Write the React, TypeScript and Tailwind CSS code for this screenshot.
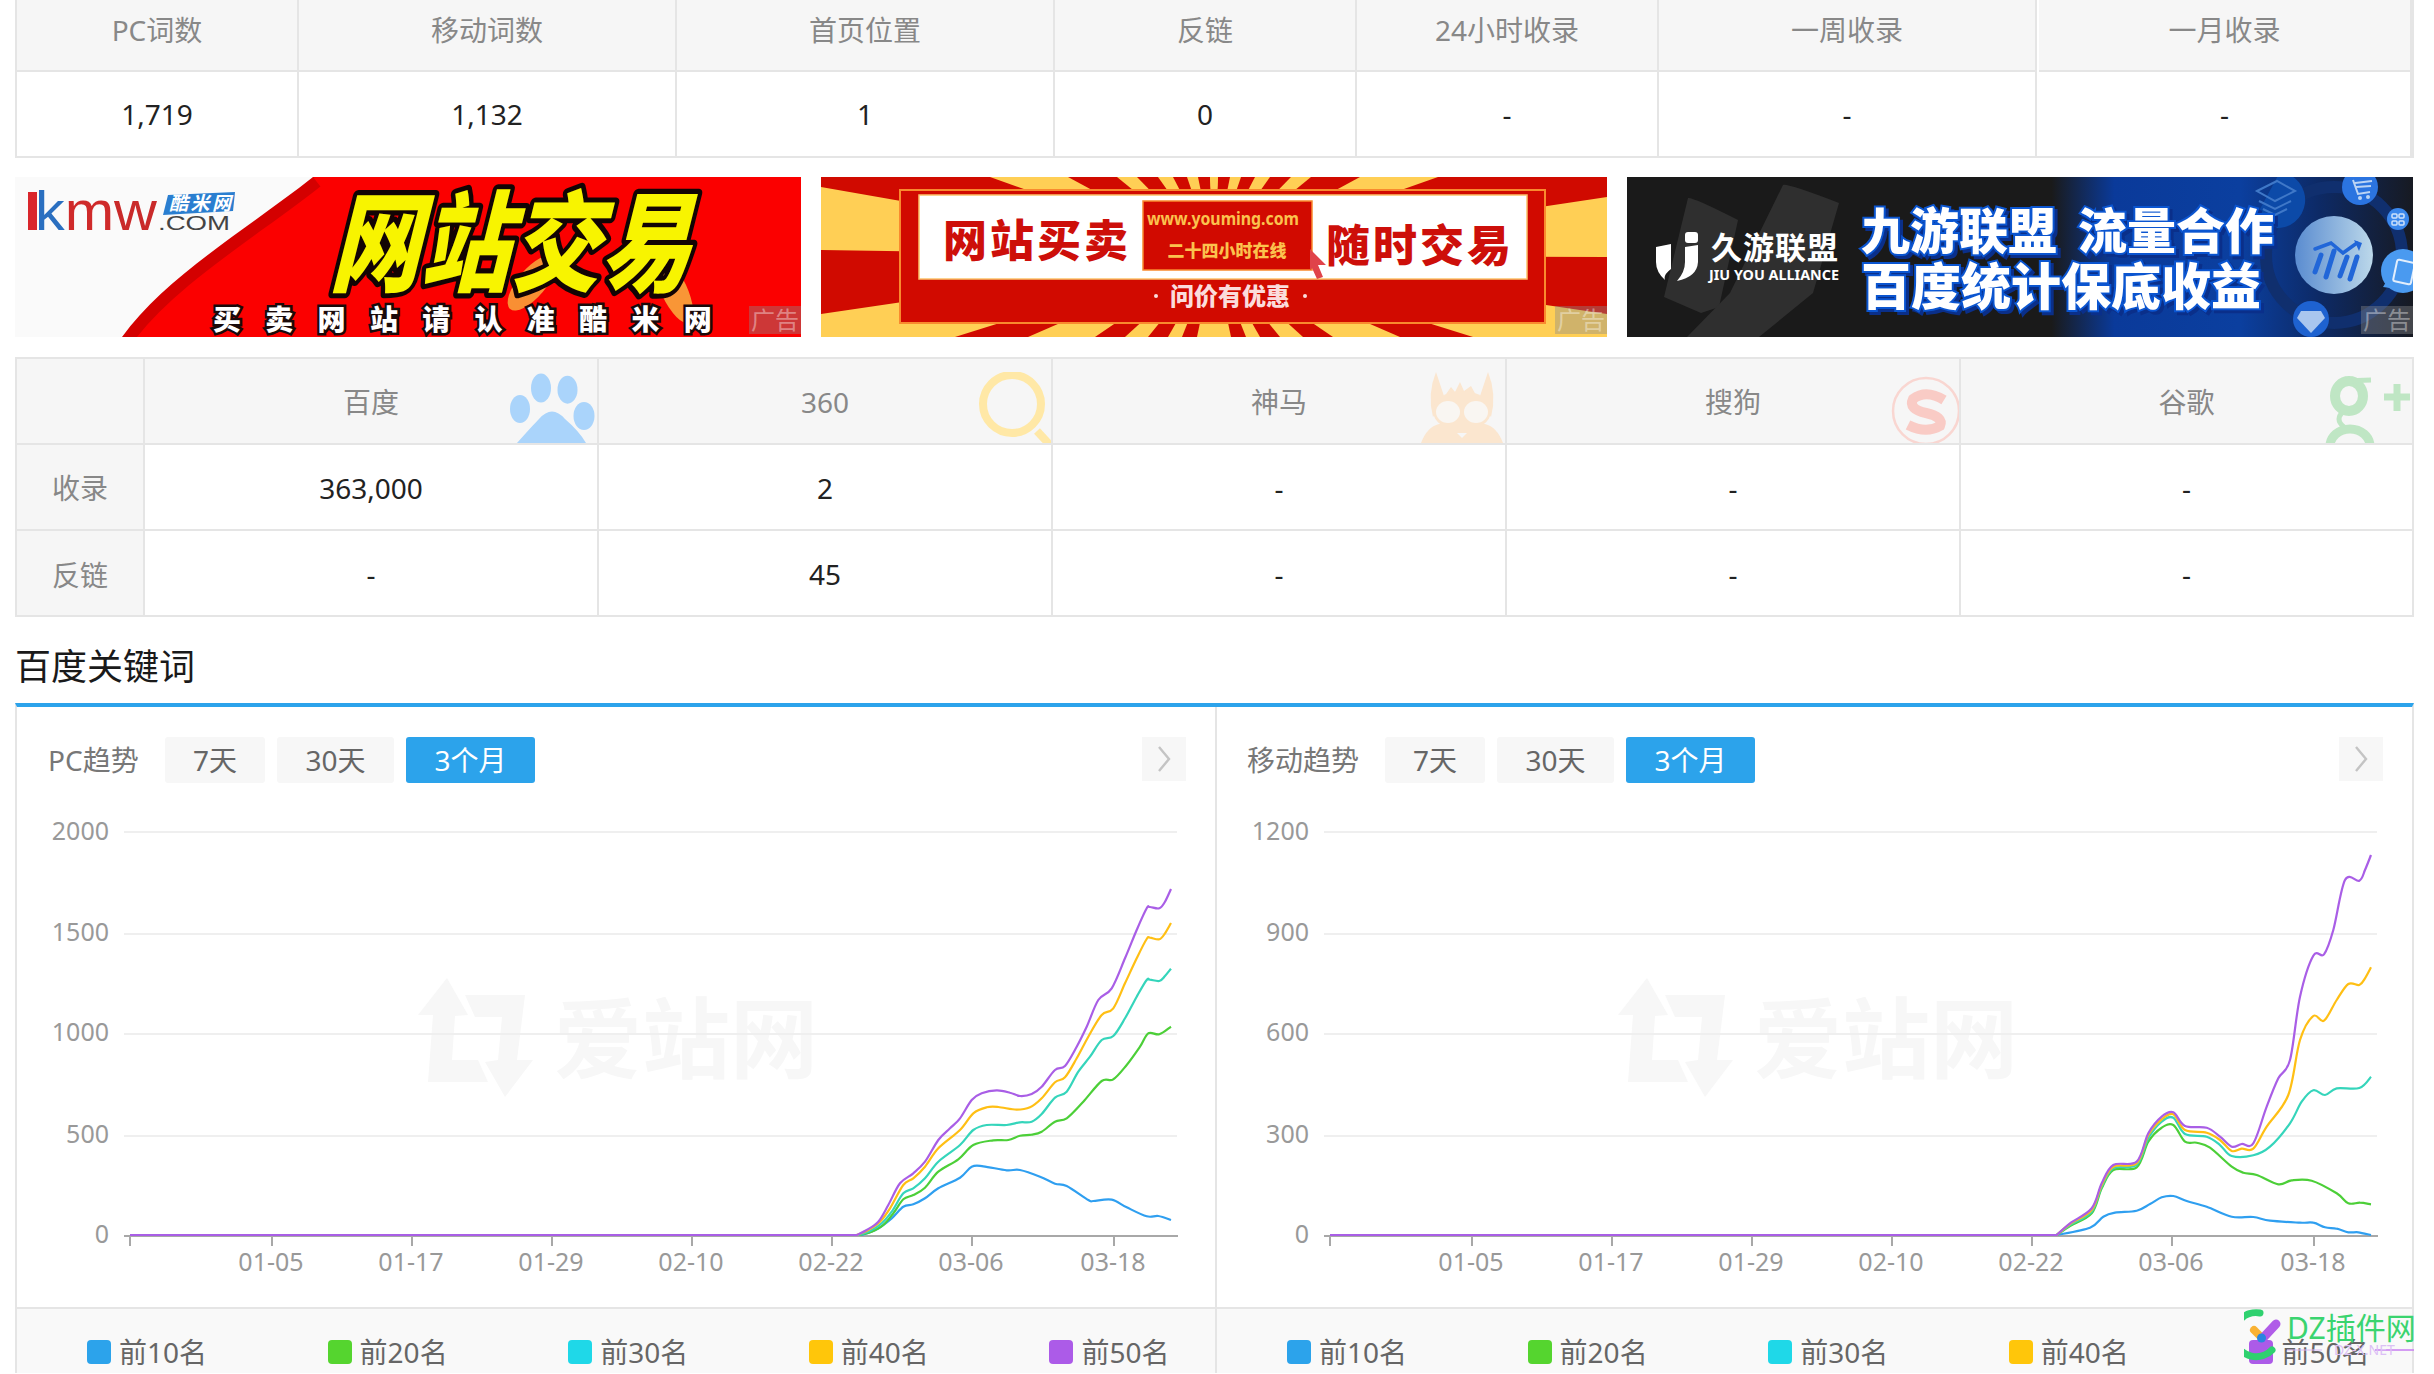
import React from "react";

type P = [number, number];

function smooth(pts: P[]): string {
  let d = `M${pts[0][0]} ${pts[0][1]}`;
  for (let i = 0; i < pts.length - 1; i++) {
    const p0 = pts[Math.max(0, i - 1)];
    const p1 = pts[i];
    const p2 = pts[i + 1];
    const p3 = pts[Math.min(pts.length - 1, i + 2)];
    const c1x = p1[0] + (p2[0] - p0[0]) / 6;
    const c1y = p1[1] + (p2[1] - p0[1]) / 6;
    const c2x = p2[0] - (p3[0] - p1[0]) / 6;
    const c2y = p2[1] - (p3[1] - p1[1]) / 6;
    d += ` C${c1x.toFixed(1)} ${c1y.toFixed(1)} ${c2x.toFixed(1)} ${c2y.toFixed(1)} ${p2[0].toFixed(1)} ${p2[1].toFixed(1)}`;
  }
  return d;
}

const flat = (x0: number, pts: number[][]): string => {
  const mapped: P[] = pts.map(([x, y]) => [x0 + x / 3, 850 + y / 3]);
  return `M130 1235 L${mapped[0][0].toFixed(1)} 1235 ` + smooth(mapped).replace(/^M[^C]*/, "");
};

const pc: Record<string, number[][]> = {
  blue: [[185,1155],[230,1138],[275,1105],[310,1070],[340,1063],[375,1045],[415,1015],[480,983],[515,950],[550,949],[620,961],[660,960],[720,980],[765,1001],[800,1008],[865,1050],[880,1053],[935,1049],[980,1072],[1040,1099],[1075,1098],[1113,1110]],
  green: [[180,1155],[215,1145],[250,1125],[280,1090],[310,1048],[340,1035],[375,1013],[415,965],[475,928],[520,885],[580,871],[625,870],[660,857],[695,854],[725,845],[765,815],[800,805],[850,755],[905,693],[940,688],[980,645],[1020,590],[1045,550],[1078,553],[1113,530]],
  teal: [[175,1155],[210,1143],[245,1120],[275,1085],[310,1030],[340,1015],[375,985],[415,935],[480,885],[520,840],[560,825],[620,825],[660,817],[695,815],[725,792],[765,743],[800,725],[835,665],[870,620],[905,570],[940,558],[975,505],[1010,440],[1040,390],[1050,389],[1078,393],[1095,378],[1113,356]],
  yellow: [[170,1155],[205,1140],[240,1115],[270,1075],[310,1005],[340,985],[375,950],[415,895],[480,840],[520,790],[560,772],[595,771],[650,779],[690,772],[725,745],[765,697],[795,682],[830,625],[865,560],[905,495],[940,475],[975,400],[1010,325],[1040,267],[1050,263],[1078,268],[1095,250],[1113,219]],
  purple: [[170,1155],[200,1140],[235,1115],[265,1065],[300,1000],[340,970],[375,935],[415,870],[450,835],[480,805],[515,750],[545,730],[590,721],[630,728],[660,738],[695,732],[725,710],[765,660],[795,648],[830,590],[860,530],[895,450],[935,415],[975,325],[1010,240],[1040,175],[1050,171],[1078,175],[1095,155],[1113,117]],
};

const mobile: Record<string, number[][]> = {
  blue: [[20,1155],[120,1133],[160,1100],[195,1088],[260,1082],[300,1062],[335,1042],[370,1038],[410,1053],[470,1070],[545,1100],[610,1101],[660,1112],[750,1118],[790,1118],[825,1132],[860,1136],[895,1147],[925,1147],[963,1155]],
  green: [[20,1155],[60,1128],[125,1090],[155,1015],[190,960],[260,952],[295,875],[335,833],[370,825],[405,875],[440,878],[480,893],[545,950],[580,968],[620,975],[685,1003],[725,991],[785,992],[860,1030],[895,1060],[930,1058],[963,1063]],
  teal: [[20,1155],[60,1125],[125,1085],[155,1010],[190,955],[260,945],[295,865],[335,815],[370,803],[405,852],[470,860],[510,885],[545,918],[610,916],[660,890],[720,820],[755,755],[790,721],[825,735],[860,715],[928,714],[963,680]],
  yellow: [[20,1155],[60,1122],[125,1080],[155,1005],[190,950],[260,940],[295,855],[335,808],[370,793],[405,840],[470,848],[510,870],[545,903],[575,896],[610,896],[650,830],[715,735],[750,570],[790,498],[822,512],[860,450],[895,402],[928,405],[945,385],[963,352]],
  purple: [[20,1155],[60,1120],[125,1075],[155,1000],[190,945],[260,935],[295,850],[335,800],[370,787],[405,828],[470,833],[510,860],[545,890],[575,882],[610,880],[650,770],[685,685],[720,630],[750,440],[790,317],[822,313],[850,240],[885,90],[928,92],[945,60],[963,15]],
};

const lineColors: [string, string][] = [
  ["blue", "#2f9ff0"],
  ["green", "#4ccf38"],
  ["teal", "#35d5bb"],
  ["yellow", "#ffbf14"],
  ["purple", "#a95ee6"],
];

const ticks = [272, 412, 552, 692, 832, 972, 1114];
const dates = ["01-05", "01-17", "01-29", "02-10", "02-22", "03-06", "03-18"];
const gridY = [832, 934, 1034, 1136];

function Chart({ data, x0, labels, width }: { data: Record<string, number[][]>; x0: number; labels: string[]; width: number }) {
  return (
    <svg viewBox={`17 783 ${width} 524`} className="block h-[524px] w-full">
      <polygon fill="#f7f7f7" points="447,978 468,1015 455,1016 452,1060 478,1060 488,1082 428,1082 433,1015 418,1015" />
      <polygon fill="#f7f7f7" points="465,995 525,995 517,1060 533,1060 505,1097 485,1062 498,1060 502,1017 475,1017" />
      <text x="554" y="1071" fontSize="88" fill="#f7f7f7" fontWeight="700">爱站网</text>
      {gridY.map((y) => (
        <line key={y} x1="124" x2="1177" y1={y} y2={y} stroke="#efefef" strokeWidth="2" />
      ))}
      <line x1="124" x2="1178" y1="1236" y2="1236" stroke="#a8a8a8" strokeWidth="2" />
      <line x1="130" x2="130" y1="1236" y2="1246" stroke="#a8a8a8" strokeWidth="2" />
      {ticks.map((t, i) => (
        <g key={t}>
          <line x1={t} x2={t} y1="1236" y2="1246" stroke="#a8a8a8" strokeWidth="2" />
          <text x={t - 1} y="1271" fontSize="25" fill="#999999" textAnchor="middle">{dates[i]}</text>
        </g>
      ))}
      {labels.map((l, i) => (
        <text key={l} x="109" y={[840, 941, 1041, 1143, 1243][i]} fontSize="25" fill="#999999" textAnchor="end">{l}</text>
      ))}
      {lineColors.map(([k, c]) => (
        <path key={k} d={flat(x0, data[k])} fill="none" stroke={c} strokeWidth="2.2" strokeLinejoin="round" />
      ))}
    </svg>
  );
}

const legend: [string, string][] = [
  ["前10名", "bg-[#2ca3eb]"],
  ["前20名", "bg-[#55d52f]"],
  ["前30名", "bg-[#1fd8e8]"],
  ["前40名", "bg-[#ffc60a]"],
  ["前50名", "bg-[#ac5be8]"],
];

function Panel({ title, titleW, data, x0, labels, width, last }: { title: string; titleW: string; data: Record<string, number[][]>; x0: number; labels: string[]; width: number; last?: boolean }) {
  return (
    <div className={last ? "flex w-[1195px] flex-col" : "flex w-[1200px] flex-col border-r-2 border-[#e5e5e5]"}>
      <div className={`flex h-[76px] items-start pt-[30px] ${last ? "pl-[30px] pr-[29px]" : "pl-[31px] pr-[29px]"}`}>
        <span className={`h-[46px] ${titleW} text-[28px] leading-[46px] text-[#777777]`}>{title}</span>
        <button className="ml-[26px] h-[46px] w-[100px] rounded-[3px] bg-[#f7f7f7] text-[28px] leading-[46px] text-[#666666]">7天</button>
        <button className="ml-[12px] h-[46px] w-[117px] rounded-[3px] bg-[#f7f7f7] text-[28px] leading-[46px] text-[#666666]">30天</button>
        <button className="ml-[12px] h-[46px] w-[129px] rounded-[3px] bg-[#2ca3eb] text-[28px] leading-[46px] text-white">3个月</button>
        <div className="ml-auto flex h-[44px] w-[44px] items-center justify-center bg-[#f7f7f7]">
          <svg viewBox="0 0 14 28" className="h-[28px] w-[14px]">
            <path d="M2 2 L12 14 L2 26" fill="none" stroke="#c4c4c4" strokeWidth="2.4" />
          </svg>
        </div>
      </div>
      <Chart data={data} x0={x0} labels={labels} width={width} />
      <div className="flex h-[66px] border-t-2 border-[#e5e5e5] bg-[#f9f9f9] pl-[70px] pt-[24px]">
        {legend.map(([t, c]) => (
          <div key={t} className="flex h-[38px] w-[240.6px] shrink-0 items-center gap-[8px]">
            <span className={`h-[24px] w-[24px] rounded-[4px] ${c}`} />
            <span className="text-[28px] leading-[38px] text-[#666666]">{t}</span>
          </div>
        ))}
      </div>
    </div>
  );
}

const Ad = () => (
  <span className="absolute bottom-[3px] right-0 h-[28px] w-[52px] bg-[#8a8a8a]/40 text-center text-[24px] leading-[28px] text-white/40">广告</span>
);

function BannerKmw() {
  return (
    <div className="relative h-[160px] w-[786px] overflow-hidden">
      <svg viewBox="0 0 786 160" className="block h-full w-full">
        <rect width="786" height="160" fill="#fb0000" />
        <ellipse cx="517" cy="106" rx="14" ry="34" fill="#f8a83c" opacity="0.85" transform="rotate(40 517 106)" />
        <ellipse cx="659" cy="113" rx="13" ry="36" fill="#f8b040" opacity="0.85" transform="rotate(-25 659 113)" />
        <path d="M298 0 C235 50 150 100 107 160" fill="none" stroke="#d40000" strokeWidth="24" />
        <path d="M0 0 H298 C235 50 150 100 107 160 H0 Z" fill="#fafafa" />
        <rect x="13" y="15" width="9" height="38" fill="#d9262c" />
        <text x="20" y="53" fontSize="56" fontFamily="Liberation Sans" textLength="122" lengthAdjust="spacingAndGlyphs">
          <tspan fill="#2a6fc0">k</tspan>
          <tspan fill="#cf2a2a">m</tspan>
          <tspan fill="#c92a2a">w</tspan>
        </text>
        <path d="M153 18 L220 15 L218 34 L148 38 Z" fill="#2a7ed0" />
        <text x="154" y="33" fontSize="19" fontStyle="italic" fontWeight="700" fill="#ffffff" textLength="62">酷米网</text>
        <text x="143" y="53" fontSize="20" fontFamily="Liberation Sans" fill="#444444" textLength="72" lengthAdjust="spacingAndGlyphs">.COM</text>
        <text
          transform="translate(314 106) skewX(-14) scale(0.94 1.14)"
          fontSize="96"
          fontWeight="900"
          fill="#f8f400"
          stroke="#120404"
          strokeWidth="9"
          strokeLinejoin="round"
          paintOrder="stroke"
        >
          网站交易
        </text>
        <text x="198" y="153" fontSize="28" fontWeight="900" letterSpacing="24.3" fill="#ffffff" stroke="#1a0a0a" strokeWidth="5" paintOrder="stroke">
          买卖网站请认准酷米网
        </text>
      </svg>
      <Ad />
    </div>
  );
}

const topRays: [number, number][] = [[169, 247], [296, 316], [337, 352], [366, 377], [389, 397]];
const botRays: [number, number][] = [[207, 274], [304, 327], [347, 361], [376, 393]];
const mirror = (x: number) => 786 - x;

function BannerYouming() {
  const polys: string[] = [];
  topRays.forEach(([a, b]) => {
    polys.push(`393,79 ${a},0 ${b},0`);
    polys.push(`393,79 ${mirror(a)},0 ${mirror(b)},0`);
  });
  botRays.forEach(([a, b]) => {
    polys.push(`393,79 ${a},160 ${b},160`);
    polys.push(`393,79 ${mirror(a)},160 ${mirror(b)},160`);
  });
  polys.push("393,79 0,10 0,73", "393,79 786,20 786,80", "393,79 0,137 0,160 134,160", "393,79 786,137 786,160 652,160");
  return (
    <div className="relative h-[160px] w-[786px] overflow-hidden">
      <svg viewBox="0 0 786 160" className="block h-full w-full">
        <rect width="786" height="160" fill="#d00a00" />
        {polys.map((p) => (
          <polygon key={p} points={p} fill="#ffcf55" />
        ))}
        <rect x="79" y="13" width="645" height="133" fill="#d10a00" stroke="#f98a2e" strokeWidth="2" />
        <rect x="98" y="18" width="608" height="84" fill="#ffffff" stroke="#fbc26a" strokeWidth="1.5" />
        <rect x="322" y="24" width="169" height="69" fill="#d10a00" stroke="#f98a2e" strokeWidth="1.5" />
        <text x="122" y="80" fontSize="44" fontWeight="900" letterSpacing="3" fill="#cd0f0a">网站买卖</text>
        <text x="505" y="85" fontSize="44" fontWeight="900" letterSpacing="3" fill="#cd0f0a">随时交易</text>
        <text x="326" y="48" fontSize="18" fontWeight="700" fill="#fbc24e" textLength="152" lengthAdjust="spacingAndGlyphs">www.youming.com</text>
        <text x="406" y="80" fontSize="17" fontWeight="900" textAnchor="middle" fill="#fbc24e">二十四小时在线</text>
        <text x="409" y="128" fontSize="24" fontWeight="900" textAnchor="middle" fill="#fbdcdc">问价有优惠</text>
        <circle cx="335" cy="119" r="2" fill="#fbdcdc" />
        <circle cx="484" cy="119" r="2" fill="#fbdcdc" />
        <path d="M489 72 L505 88 L497 88 L502 100 L496 102 L491 91 L489 93 Z" fill="#e0434a" />
      </svg>
      <Ad />
    </div>
  );
}

function BannerJiuyou() {
  return (
    <div className="relative h-[160px] w-[786px] overflow-hidden">
      <svg viewBox="0 0 786 160" className="block h-full w-full">
        <defs>
          <linearGradient id="jy" x1="0" x2="1" y1="0" y2="0">
            <stop offset="0.54" stopColor="#1a1a1a" />
            <stop offset="0.62" stopColor="#0a3a9a" />
            <stop offset="0.78" stopColor="#0b3f9f" />
            <stop offset="0.88" stopColor="#0d2a66" />
            <stop offset="1" stopColor="#171a22" />
          </linearGradient>
          <linearGradient id="ball" x1="0" x2="1" y1="0" y2="0">
            <stop offset="0" stopColor="#5a8cd0" />
            <stop offset="1" stopColor="#bcd8ea" />
          </linearGradient>
        </defs>
        <rect width="786" height="160" fill="url(#jy)" />
        <path d="M61 21 Q66 20 111 43 L92 130 L74 136 L37 120 Z" fill="#2f2f2f" />
        <path d="M156 8 Q160 6 212 26 L186 116 L132 160 L60 160 L103 116 Z" fill="#2f2f2f" />
        <path d="M29 70 L44 67 L44 92 Q36 98 38 103 Q29 95 29 85 Z" fill="#ffffff" />
        <rect x="58" y="55" width="13" height="11" rx="3" fill="#ffffff" />
        <path d="M58 70 L71 68 L71 85 Q70 100 50 104 Q58 95 58 85 Z" fill="#ffffff" />
        <text x="84" y="82" fontSize="31" fontWeight="700" fill="#ffffff" textLength="127">久游联盟</text>
        <text x="82" y="103" fontSize="15" fontWeight="700" fill="#ffffff" textLength="130" lengthAdjust="spacingAndGlyphs">JIU YOU ALLIANCE</text>
        <circle cx="707" cy="78" r="68" fill="none" stroke="#102f6e" strokeWidth="12" />
        <path d="M653 -5 a28 28 0 1 1 -6 56 l-20 -8 Z" fill="#0c4aa8" />
        <g fill="none" stroke="#3f78c8" strokeWidth="2">
          <path d="M630 14 L650 4 L668 14 L648 24 Z" />
          <path d="M632 24 L648 32 L664 24" />
          <path d="M636 32 L648 38 L660 32" />
        </g>
        <circle cx="707" cy="78" r="39" fill="url(#ball)" />
        <g stroke="#2166d8" strokeWidth="5" strokeLinecap="round" fill="none">
          <path d="M688 95 L694 78" />
          <path d="M699 100 L707 74" />
          <path d="M713 99 L720 80" />
          <path d="M723 102 L730 80" />
          <path d="M688 72 L704 66 L716 76 L730 66" strokeWidth="3.5" />
        </g>
        <path d="M727 63 L735 66 L732 74 Z" fill="#2166d8" />
        <circle cx="733" cy="10" r="18" fill="#2b74e0" />
        <path d="M733 28 L727 25 L740 25 Z" fill="#2b74e0" />
        <path d="M726 3 L731 17 L743 15 M728 6 L745 4 M729 10 L744 9" stroke="#bcd4f4" strokeWidth="2" fill="none" />
        <circle cx="733" cy="21" r="2" fill="#bcd4f4" />
        <circle cx="741" cy="20" r="2" fill="#bcd4f4" />
        <circle cx="771" cy="42" r="11" fill="#3a87ec" />
        <g fill="none" stroke="#cfe2fa" strokeWidth="1.5">
          <rect x="765" y="37" width="5" height="4" rx="1" />
          <rect x="772" y="37" width="5" height="4" rx="1" />
          <rect x="765" y="44" width="5" height="4" rx="1" />
          <rect x="772" y="44" width="5" height="4" rx="1" />
        </g>
        <circle cx="776" cy="94" r="22" fill="#4a9af0" />
        <path d="M756 110 L762 100 L770 112 Z" fill="#4a9af0" />
        <rect x="768" y="84" width="18" height="22" rx="2" fill="none" stroke="#e2eefc" strokeWidth="2" transform="rotate(12 777 95)" />
        <circle cx="684" cy="142" r="18" fill="#1e62d0" />
        <path d="M674 134 L694 134 L698 141 L684 156 L670 141 Z" fill="#a9c6ee" />
        <g className="drop-shadow-[3px_3px_0_#0a2f8a]" fontWeight="900" fontSize="49" fill="#ffffff" stroke="#0b55d0" strokeWidth="4" paintOrder="stroke">
          <text x="234" y="72">九游联盟</text>
          <text x="451" y="72">流量合作</text>
          <text x="234" y="128" fontSize="50">百度统计保底收益</text>
        </g>
      </svg>
      <Ad />
    </div>
  );
}

const Paw = () => (
  <svg viewBox="510 373 88 71" className="absolute bottom-0 right-0 h-[71px] w-[88px]">
    <g fill="#aad4fb">
      <ellipse cx="521" cy="410" rx="10" ry="14" />
      <ellipse cx="542" cy="389" rx="10" ry="14.5" />
      <ellipse cx="568.5" cy="390.7" rx="10" ry="14" />
      <ellipse cx="585" cy="417" rx="10.5" ry="14" />
      <path d="M518 444 Q535 425 540 420 Q553 405 566 420 Q580 432 587 444 Z" />
    </g>
  </svg>
);

const Lens = () => (
  <svg viewBox="977 373 74 71" className="absolute bottom-0 right-0 h-[71px] w-[74px]">
    <circle cx="1012" cy="405" r="29" fill="none" stroke="#ffe8a6" strokeWidth="8" />
    <line x1="1037" y1="432" x2="1050" y2="446" stroke="#ffe8a6" strokeWidth="8" />
  </svg>
);

const Alpaca = () => (
  <svg viewBox="1420 373 86 71" className="absolute bottom-0 right-0 h-[71px] w-[86px]">
    <g fill="#fbe6cf">
      <path d="M1437 373 Q1428 395 1434 418 L1446 400 Z" />
      <path d="M1489 373 Q1498 395 1492 418 L1480 400 Z" />
      <path d="M1445 398 L1452 388 L1456 393 L1461 383 L1465 392 L1472 387 L1478 398 Z" />
      <ellipse cx="1463" cy="412" rx="29" ry="20" />
      <ellipse cx="1463" cy="430" rx="19" ry="14" />
      <path d="M1422 444 Q1428 428 1440 425 L1486 425 Q1498 428 1504 444 Z" />
    </g>
    <ellipse cx="1449" cy="413" rx="12" ry="11" fill="#f9f6f2" />
    <ellipse cx="1477" cy="413" rx="12" ry="11" fill="#f9f6f2" />
    <path d="M1458 434 L1463 439 L1468 434" fill="#f6f6f6" />
  </svg>
);

const Sogou = () => (
  <svg viewBox="1888 376 72 68" className="absolute bottom-0 right-0 h-[68px] w-[72px]">
    <circle cx="1927" cy="412" r="33" fill="none" stroke="#f9d6d1" strokeWidth="2.5" />
    <path d="M1945 401 Q1927 390 1914 400 Q1909 410 1927 414 Q1945 418 1941 427 Q1927 435 1909 426" fill="none" stroke="#f9cbc5" strokeWidth="10" />
  </svg>
);

const GPlus = () => (
  <svg viewBox="2322 376 91 68" className="absolute bottom-0 right-0 h-[68px] w-[91px]">
    <g fill="none" stroke="#bfe6c4">
      <ellipse cx="2350" cy="397" rx="14" ry="15" strokeWidth="10" />
      <path d="M2345 382 L2372 381" strokeWidth="5" />
      <path d="M2345 412 Q2335 420 2345 428" strokeWidth="5" />
      <ellipse cx="2351" cy="447" rx="20" ry="17" strokeWidth="9" />
      <path d="M2385 398 H2411 M2398 385 V412" strokeWidth="7" />
    </g>
  </svg>
);

const t1 = [
  { h: "PC词数", v: "1,719", c: "w-[282px]" },
  { h: "移动词数", v: "1,132", c: "w-[378px]" },
  { h: "首页位置", v: "1", c: "w-[378px]" },
  { h: "反链", v: "0", c: "w-[302px]" },
  { h: "24小时收录", v: "-", c: "w-[302px]" },
  { h: "一周收录", v: "-", c: "w-[378px]" },
  { h: "一月收录", v: "-", c: "w-[375px] border-r-0 pl-[2px]" },
];

const engines = [
  { n: "百度", i: <Paw />, a: "363,000", b: "-" },
  { n: "360", i: <Lens />, a: "2", b: "45" },
  { n: "神马", i: <Alpaca />, a: "-", b: "-" },
  { n: "搜狗", i: <Sogou />, a: "-", b: "-" },
  { n: "谷歌", i: <GPlus />, a: "-", b: "-" },
];

function StatsTop() {
  return (
    <div className="mx-[15px] flex w-[2399px] border-x-2 border-b-2 border-[#e5e5e5]">
      {t1.map((c) => (
        <div key={c.h} className={`flex shrink-0 flex-col border-r-2 border-[#e5e5e5] ${c.c}`}>
          <div className="flex h-[72px] items-center justify-center border-b-2 border-[#e5e5e5] bg-[#f6f6f6] pb-[11px] text-[28px] text-[#888888]">{c.h}</div>
          <div className="flex h-[84px] items-center justify-center text-[28px] text-[#222222]">{c.v}</div>
        </div>
      ))}
    </div>
  );
}

function Engines() {
  return (
    <div className="mx-[15px] mt-[20px] flex w-[2399px] border-x-2 border-y-2 border-[#e5e5e5]">
      <div className="flex w-[128px] shrink-0 flex-col border-r-2 border-[#e5e5e5] bg-[#f6f6f6] text-[28px] text-[#888888]">
        <div className="h-[86px] border-b-2 border-[#e5e5e5]" />
        <div className="flex h-[86px] items-center justify-center border-b-2 border-[#e5e5e5] pt-[2px]">收录</div>
        <div className="flex h-[84px] items-center justify-center pt-[3px]">反链</div>
      </div>
      {engines.map((e, i) => (
        <div key={e.n} className={i === 4 ? "flex w-[451px] shrink-0 flex-col" : "flex w-[454px] shrink-0 flex-col border-r-2 border-[#e5e5e5]"}>
          <div className="relative flex h-[86px] items-center justify-center overflow-hidden border-b-2 border-[#e5e5e5] bg-[#f6f6f6] pt-[2px] text-[28px] text-[#888888]">
            {e.i}
            <span className="relative">{e.n}</span>
          </div>
          <div className="flex h-[86px] items-center justify-center border-b-2 border-[#e5e5e5] pt-[1px] text-[28px] text-[#222222]">{e.a}</div>
          <div className="flex h-[84px] items-center justify-center pt-[2px] text-[28px] text-[#222222]">{e.b}</div>
        </div>
      ))}
    </div>
  );
}

function DzMark() {
  return (
    <div className="absolute bottom-0 right-0 h-[74px] w-[190px]">
      <svg viewBox="2244 1300 190 74" className="absolute inset-0 h-full w-full">
        <path d="M2260 1313 A22 22 0 1 0 2272 1350" fill="none" stroke="#2fd16f" strokeWidth="7" strokeLinecap="round" />
        <line x1="2254" y1="1330" x2="2262" y2="1338" stroke="#f9b233" strokeWidth="8" strokeLinecap="round" />
        <line x1="2263" y1="1338" x2="2276" y2="1324" stroke="#b05ce8" strokeWidth="9" strokeLinecap="round" />
        <circle cx="2261.5" cy="1338" r="4.5" fill="#2a85e0" />
        <line x1="2287" x2="2322" y1="1350" y2="1350" stroke="#d9b8f5" strokeWidth="1" />
        <line x1="2375" x2="2414" y1="1350" y2="1350" stroke="#c77df0" strokeWidth="1.5" />
      </svg>
      <span className="absolute left-[43px] top-[9px] text-[30px] leading-[38px] whitespace-nowrap text-[#3ad46f]">DZ插件网</span>
      <span className="absolute left-[90px] top-[42px] text-[14px] leading-[16px] whitespace-nowrap text-[#dcc0f5]">DZ-X.NET</span>
    </div>
  );
}

export default function App() {
  return (
    <div className="relative h-[1374px] w-[2434px] overflow-hidden bg-white [font-family:'Noto_Sans','Noto_Sans_CJK_SC',sans-serif]">
      <StatsTop />
      <div className="mx-[15px] mt-[19px] flex w-[2398px] justify-between">
        <BannerKmw />
        <BannerYouming />
        <BannerJiuyou />
      </div>
      <Engines />
      <div className="mx-[15px] flex h-[86px] w-[2399px] items-center pt-[14px] text-[36px] leading-[48px] text-[#1a1a1a]">百度关键词</div>
      <div className="mx-[15px] flex w-[2399px] border-x-2 border-t-4 border-x-[#e5e5e5] border-t-[#2ca3eb]">
        <Panel title="PC趋势" titleW="w-[91px]" data={pc} x0={800} labels={["2000", "1500", "1000", "500", "0"]} width={1198} />
        <Panel title="移动趋势" titleW="w-[112px]" data={mobile} x0={850} labels={["1200", "900", "600", "300", "0"]} width={1195} last />
      </div>
      <DzMark />
    </div>
  );
}
